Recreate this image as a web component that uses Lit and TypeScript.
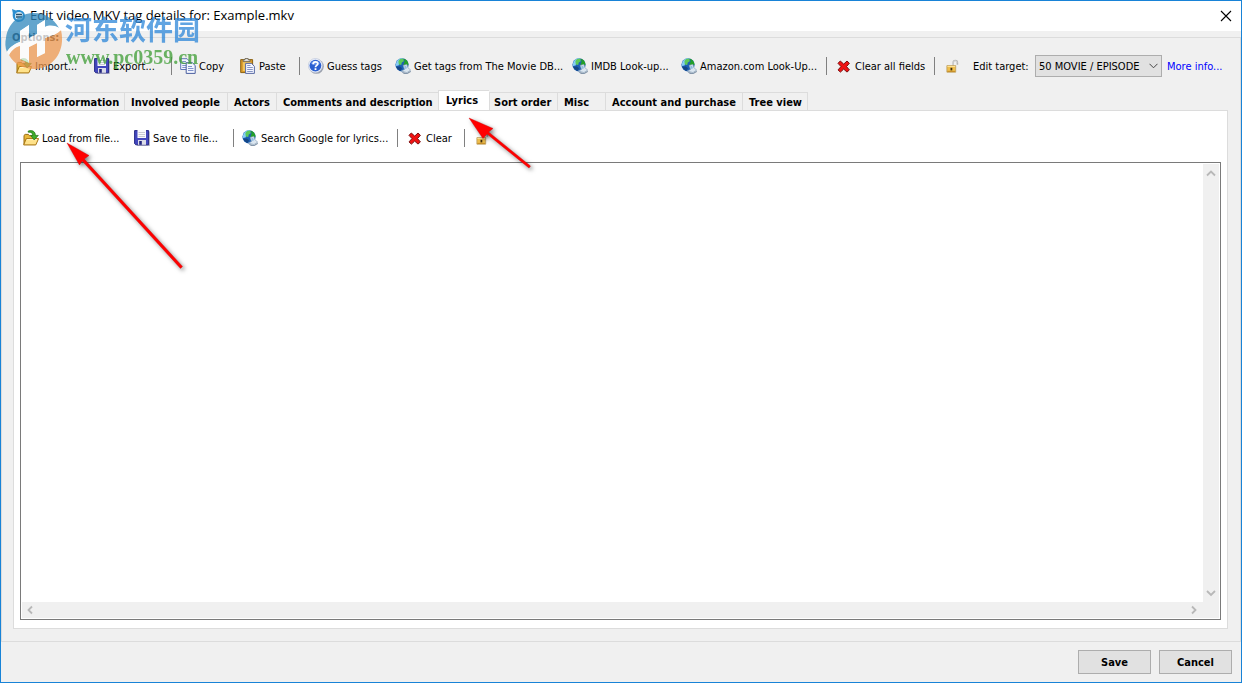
import { LitElement, html, svg, css, nothing } from "lit";
import { customElement, property, state } from "lit/decorators.js";

const ICONS: Record<string, unknown> = {
  open: svg`
    <path d="M1 14.6V5.4L2.2 4.4H5.4L6.6 5.8H12.4V14.6Z" fill="#e9b93c" stroke="#9a6c12" />
    <path d="M.7 14.9L3.2 8.6H15.6L12.8 14.9Z" fill="#ffe28a" stroke="#a87612" />
    <path d="M4 9.6H14" stroke="#fff6c8" />
    <path d="M5.2 1.1C9.6-.4 12.4 1.8 12.4 5.4H15.3L11.2 10 7.6 5.4H9.8C9.8 3.2 8.2 1.8 5.2 2.2Z" fill="#3fae2c" stroke="#1c6f14" stroke-width=".7" />`,
  save: svg`
    <path d="M1.5 1.5H15.8V16H3Z" fill="#b9bac6" />
    <path d="M.6.6H14.6V14.8H1.8L.6 13.6Z" fill="#4347bd" stroke="#282b86" />
    <path d="M3.5 0H12V8H3.5Z" fill="#fafafd" />
    <path d="M4.5 2.5H11M4.5 4.5H11M4.5 6.5H11" stroke="#c9cad4" />
    <path d="M4 10H12V14.8H4Z" fill="#dcdde8" />
    <path d="M5.2 11H7.8V14.8H5.2Z" fill="#23267d" />`,
  copy: svg`
    <path d="M.7 .7H7L9.8 3.5V11.5H.7Z" fill="#f3f6ff" stroke="#5f75b5" />
    <path d="M2.3 3.5H6M2.3 5.5H6M2.3 7.5H6M2.3 9.5H6" stroke="#8093cb" />
    <path d="M6.2 4.7H12.3L15.2 7.5V15.4H6.2Z" fill="#f3f6ff" stroke="#4a5f9f" />
    <path d="M8 8.5H12M8 10.5H13.5M8 12.5H13.5" stroke="#8093cb" />`,
  paste: svg`
    <path d="M.7 1.6H12.6V14.6H.7Z" fill="#d99a28" stroke="#8c6212" />
    <path d="M2.8 3.8H10.6V13H2.8Z" fill="#f0c560" />
    <path d="M3.2 3.6V1.8H5V.5H8.2V1.8H10V3.6Z" fill="#dedede" stroke="#68604c" stroke-width=".8" />
    <path d="M5.6 5.4H11.5L14.4 8.4V15.4H5.6Z" fill="#f5f7ff" stroke="#5a6ca5" />
    <path d="M7.2 7.5H10.5M7.2 9.5H12.8M7.2 11.5H12.8M7.2 13.5H12.8" stroke="#8795c4" />`,
  help: svg`
    <circle cx="8.4" cy="8.4" r="7.4" fill="#9ba1ad" />
    <circle cx="7.4" cy="7.6" r="7.1" fill="#eef2fb" stroke="#b6c0d6" stroke-width=".6" />
    <circle cx="7.4" cy="7.6" r="5.9" fill="#2a5fd0" />
    <path d="M2.8 5.4C4.3 1.8 10.5 1.8 12 5.4 8.8 7.4 5.8 7.4 2.8 5.4Z" fill="#5d8cea" />
    <path d="M5.1 6.2C5.1 3 9.9 3.1 9.8 5.9 9.7 7.4 7.5 7.4 7.5 9.2" fill="none" stroke="#fff" stroke-width="1.8" />
    <path d="M6.6 10.2H8.4V12H6.6Z" fill="#fff" />`,
  globe: svg`
    <circle cx="7" cy="6.8" r="6.6" fill="#1c5fb4" />
    <path d="M1 6C1.4 2.4 4.6-.2 8 .4L6.8 3.6 4.6 4.8 3.6 7.4 .8 8Z" fill="#86cdf5" />
    <path d="M3.4 3C4.6 1.2 6.4.4 8.4.6L8.8 3.2 6.8 4.6 6.2 7 3.8 6.6Z" fill="#5cc95a" />
    <path d="M9 .8C11.6 1.6 13.4 3.8 13.5 6.4L11.4 8 8.4 6.4 9.6 3.4Z" fill="#23a028" />
    <path d="M1.2 8.8L4.8 8.4 7 10.2 5.6 13C3.4 12.2 1.8 10.8 1.2 8.8Z" fill="#144585" />
    <path d="M6.4 13.8L12 15 15.8 12.4V14L12.4 16H9Z" fill="#8496aa" />
    <path d="M8.2 7.4L11.8 6.4 12.8 9.6 15.6 12 12 14.6 6.4 13 9.6 11.4Z" fill="#dbe6f0" stroke="#8ea6bd" stroke-width=".7" />
    <path d="M9 8.4L11 7.8 12 10.2 10.4 11Z" fill="#8fbbe2" />`,
  cross: svg`
    <path d="M4.3 3L7.7 6.1 11 3 13.4 5.3 10.5 8.6 13.4 11.9 11 14.1 7.7 11.1 4.4 14.1 2 11.9 5 8.6 2 5.3Z" fill="#f01212" stroke="#7b0d0d" stroke-width="1" stroke-linejoin="round" />`,
  lock: svg`
    <path d="M8.2 8V4.8C8.2 1.8 12.4 1.8 12.4 4.8V6.8" fill="none" stroke="#b4b4b4" stroke-width="1.6" />
    <path d="M8.2 7.6V4.8C8.2 2.4 12 2.2 12.2 4.6" fill="none" stroke="#e4e4e4" stroke-width=".7" />
    <path d="M1.9 7.6H10.7V14.2H1.9Z" fill="#f0bf4c" stroke="#b99a5c" stroke-width=".8" />
    <path d="M2.4 8.4H10.2" stroke="#ffe6a0" />
    <path d="M2.4 13.4H10.2" stroke="#c58c28" />
    <path d="M5.5 9.8H7.3V12.4H5.5Z" fill="#3c2c10" />`,
};

const icon = (name: string) =>
  html`<svg class="icon" viewBox="0 0 16 16" aria-hidden="true">${ICONS[name]}</svg>`;

@customElement("tool-button")
class ToolButton extends LitElement {
  @property() icon = "";
  @property() label = "";

  static styles = css`
    :host { display: block; white-space: nowrap; }
    .tool {
      display: flex; align-items: center; gap: 3px;
      height: 20px; padding: 0; border: 0; background: none; color: #000;
      font: 11px/14px Tahoma, "DejaVu Sans Condensed", "Noto Sans", sans-serif;
    }
    .text { padding-top: 2px; }
    .icon { width: 16px; height: 16px; flex: none; }
  `;

  render() {
    return html`<button class="tool" type="button" aria-label=${this.label}>
      ${icon(this.icon)}${this.icon === "lock" ? nothing : html`<span class="text">${this.label}</span>`}
    </button>`;
  }
}

@customElement("app-root")
class AppRoot extends LitElement {
  @state() active = "Lyrics";

  tabs = [
    "Basic information", "Involved people", "Actors", "Comments and description",
    "Lyrics", "Sort order", "Misc", "Account and purchase", "Tree view",
  ];

  static styles = css`
    :host {
      display: block;
      font: 11px/14px Tahoma, "DejaVu Sans Condensed", "Noto Sans", sans-serif;
      color: #000;
    }
    * { box-sizing: border-box; }
    .window {
      position: relative; display: flex; flex-direction: column;
      min-height: 100vh; border: 1px solid #1883d7; background: #f0f0f0;
    }
    .titlebar {
      display: flex; align-items: center; gap: 3px; height: 30px; padding: 0 8px 0 10px;
      background: #fff;
    }
    .title { flex: 1; margin: 0; padding-bottom: 2px; font: 13px/16px "Segoe UI", "Open Sans", sans-serif; }
    .app-icon { width: 16px; height: 16px; }
    .close { width: 14px; height: 14px; padding: 0; border: 0; background: none; }
    .close svg { display: block; width: 14px; height: 14px; }
    .options {
      flex: 1; display: flex; flex-direction: column; min-width: 0;
      margin-top: 6px; padding: 0 12px; border: 1px solid #dcdcdc;
      padding: 0 12px 12px 11px;
    }
    .legend {
      align-self: flex-start; margin: -7px 0 10px -1px; background: #f0f0f0;
      font-weight: bold; color: #222;
    }
    .toolbar { display: grid; align-items: center; white-space: nowrap; }
    .main-tools {
      grid-template-columns: 78px 77px 9px 60px 59px 9px 87px 177px 109px 145px 10px 98px 11px 28px 62px 127px 1fr;
      height: 22px; padding-left: 3px;
    }
    .lyric-tools {
      grid-template-columns: 111px 99px 9px 155px 10px 57px 11px 1fr;
      height: 20px; padding-left: 3px;
    }
    .sep { width: 1px; height: 18px; background: #808080; }
    .target {
      appearance: none; width: 127px; height: 22px; padding: 1px 20px 0 3px;
      border: 1px solid #adadad; border-radius: 0; color: #000;
      font: inherit; background: #e1e1e1;
      grid-area: 1 / 1;
    }
    .caption { padding-top: 2px; }
    .select { display: grid; align-items: center; }
    .chevron { grid-area: 1 / 1; justify-self: end; width: 9px; height: 6px; margin-right: 4px; pointer-events: none; }
    .more { padding: 2px 0 0 5px; color: #00f; text-decoration: none; }
    .tablist {
      display: grid; align-items: end; justify-content: start; height: 21px;
      grid-template-columns: 109px 103px 49px 162px 51px 68px 48px 137px 66px;
      margin: 13px 0 -1px 2px;
    }
    .tab {
      height: 19px; padding: 2px 0 0 6px; border: 1px solid #dcdcdc; border-right: 0;
      background: #f0f0f0; color: #000; text-align: left; white-space: nowrap;
      font: bold 11px/14px Tahoma, "DejaVu Sans Condensed", "Noto Sans", sans-serif;
    }
    .tab:first-child { padding-left: 5px; }
    .tab:last-child { border-right: 1px solid #dcdcdc; }
    .tab.active {
      height: 21px; padding: 0 0 1px 7px; border-bottom: 0; background: #fff;
    }
    .tab.active + .tab { padding-left: 4px; }
    .panel {
      flex: 1; display: flex; flex-direction: column; gap: 14px;
      padding: 17px 6px 8px; border: 1px solid #dcdcdc; background: #fff;
    }
    .editor {
      flex: 1; display: grid; grid-template: 1fr 16px / 1fr 16px;
      padding: 1px; border: 1px solid #7a7a7a; background: #fff;
    }
    .lyrics {
      width: 100%; height: 100%; padding: 2px; border: 0; outline: 0; resize: none;
      background: #fff; font: inherit; overflow: hidden;
    }
    .bar { display: flex; justify-content: space-between; background: #f0f0f0; }
    .bar svg { width: 16px; height: 18px; }
    .vertical { flex-direction: column; grid-row: 1 / 3; grid-column: 2; padding-bottom: 16px; }
    .horizontal { height: 16px; }
    .horizontal svg { height: 16px; }
    .footer { display: flex; justify-content: flex-end; gap: 8px; padding: 8px 9px; }
    .action {
      width: 73px; height: 24px; padding: 2px 0 0; border: 1px solid #adadad; background: #e1e1e1;
      color: #000; font: bold 11px/14px Tahoma, "DejaVu Sans Condensed", "Noto Sans", sans-serif;
    }
    .overlay { position: absolute; pointer-events: none; overflow: visible; }
    .brand { left: 3px; top: 10px; width: 60px; height: 60px; opacity: 0.75; }
    .brand-name {
      left: 64px; top: 12px; color: #2b86d9; opacity: 0.75; white-space: nowrap;
      font: bold 27px/32px "Noto Sans CJK SC", sans-serif;
    }
    .brand-url {
      left: 65px; top: 45px; color: #3c9c33; opacity: 0.75; white-space: nowrap;
      font: bold 20px/22px "Liberation Serif", serif;
    }
    .arrow { filter: drop-shadow(2px 2px 2px rgba(0, 0, 0, 0.5)); }
    .arrow-load { left: 65px; top: 141px; width: 120px; height: 130px; }
    .arrow-tab { left: 467px; top: 116px; width: 66px; height: 54px; }
  `;

  arrowButton(d: string) {
    return html`<svg viewBox="0 0 16 16" aria-hidden="true">
      <path d=${d} fill="none" stroke="#b8b8b8" stroke-width="1.8" />
    </svg>`;
  }

  render() {
    return html`
      <main class="window">
        <header class="titlebar">
          <svg class="app-icon" viewBox="0 0 16 16" aria-hidden="true">
            <path d="M1 1L5 2.4C9 .8 14 3.2 14 8S9 15 5.4 13.4 1.4 8 1.8 5Z" fill="#2d8fd0" />
            <circle cx="8" cy="8" r="4" fill="#d9edf8" />
            <path d="M5 6.5H11M5 9H11" stroke="#28506b" stroke-width="1.3" />
          </svg>
          <h1 class="title">Edit video MKV tag details for: Example.mkv</h1>
          <button class="close" type="button" aria-label="Close">
            <svg viewBox="0 0 14 14"><path d="M2 2L12 12M12 2L2 12" stroke="#000" stroke-width="1.1" /></svg>
          </button>
        </header>

        <section class="options" role="group" aria-labelledby="options-legend">
          <div class="legend" id="options-legend">Options:</div>
          <div class="toolbar main-tools">
            <tool-button icon="open" label="Import..."></tool-button>
            <tool-button icon="save" label="Export..."></tool-button>
            <span class="sep"></span>
            <tool-button icon="copy" label="Copy"></tool-button>
            <tool-button icon="paste" label="Paste"></tool-button>
            <span class="sep"></span>
            <tool-button icon="help" label="Guess tags"></tool-button>
            <tool-button icon="globe" label="Get tags from The Movie DB..."></tool-button>
            <tool-button icon="globe" label="IMDB Look-up..."></tool-button>
            <tool-button icon="globe" label="Amazon.com Look-Up..."></tool-button>
            <span class="sep"></span>
            <tool-button icon="cross" label="Clear all fields"></tool-button>
            <span class="sep"></span>
            <tool-button icon="lock" label="Lock fields"></tool-button>
            <label class="caption" for="target">Edit target:</label>
            <div class="select">
              <select class="target" id="target"><option>50 MOVIE / EPISODE</option></select>
              <svg class="chevron" viewBox="0 0 9 6" aria-hidden="true">
                <path d="M.5 .8L4.5 4.8 8.5 .8" fill="none" stroke="#444" />
              </svg>
            </div>
            <a class="more" href="#">More info...</a>
          </div>

          <div class="tablist" role="tablist">
            ${this.tabs.map(
              (t) => html`<button
                class="tab ${t === this.active ? "active" : ""}"
                type="button" role="tab" aria-selected=${t === this.active}
                @click=${() => (this.active = t)}
              >${t}</button>`
            )}
          </div>

          <section class="panel" role="tabpanel">
            <div class="toolbar lyric-tools">
              <tool-button icon="open" label="Load from file..."></tool-button>
              <tool-button icon="save" label="Save to file..."></tool-button>
              <span class="sep"></span>
              <tool-button icon="globe" label="Search Google for lyrics..."></tool-button>
              <span class="sep"></span>
              <tool-button icon="cross" label="Clear"></tool-button>
              <span class="sep"></span>
              <tool-button icon="lock" label="Lock lyrics"></tool-button>
            </div>
            <div class="editor">
              <textarea class="lyrics" aria-label="Lyrics"></textarea>
              <div class="bar vertical">
                ${this.arrowButton("M4 10.5L8 6.5 12 10.5")} ${this.arrowButton("M4 6L8 10 12 6")}
              </div>
              <div class="bar horizontal">
                ${this.arrowButton("M10 4.5L6.5 8 10 11.5")} ${this.arrowButton("M5 4.5L8.5 8 5 11.5")}
              </div>
            </div>
          </section>
        </section>

        <footer class="footer">
          <button class="action" type="button">Save</button>
          <button class="action" type="button">Cancel</button>
        </footer>

        <svg class="overlay brand" viewBox="0 0 60 60" aria-hidden="true">
          <path d="M2 27C4 12 16 2 30 2 41 2 50 8 55 17 50 14 45 14 41 16V9L33 14V23L25 27V14L16 20V31C10 33 5 37 3 41 1 37 1 31 2 27Z" fill="#2f88bd" />
          <path d="M5 44C8 38 12 35 17 34V48L25 52V36L33 32V46L41 42V27C48 25 54 22 57 19 62 40 49 58 30 58 19 58 10 53 5 44Z" fill="#ee9950" />
          <path d="M16 20L25 14V27L33 23V14L41 9V42L33 46V32L25 36V52L16 48Z" fill="#fff" />
          <path d="M3 41C5 37 10 33 16 31V35C11 36 7 40 5 44ZM41 16C46 14 51 15 55 17L57 19C53 23 48 25 41 27Z" fill="#fff" />
        </svg>
        <div class="overlay brand-name" lang="zh-CN">河东软件园</div>
        <div class="overlay brand-url">www.pc0359.cn</div>

        <svg class="overlay arrow arrow-load" viewBox="0 0 120 130" aria-hidden="true">
          <path d="M1 1L23 13.5 18.2 17 116.5 124.4 114.5 126.4 16.2 19 13.5 23Z" fill="#f00" stroke="#d00000" stroke-width=".4" />
        </svg>
        <svg class="overlay arrow arrow-tab" viewBox="0 0 66 54" aria-hidden="true">
          <path d="M1 1L25 11.5 20.6 15 62.5 49 61 51 19 17 15 21.5Z" fill="#f00" stroke="#d00000" stroke-width=".4" />
        </svg>
      </main>
    `;
  }
}
